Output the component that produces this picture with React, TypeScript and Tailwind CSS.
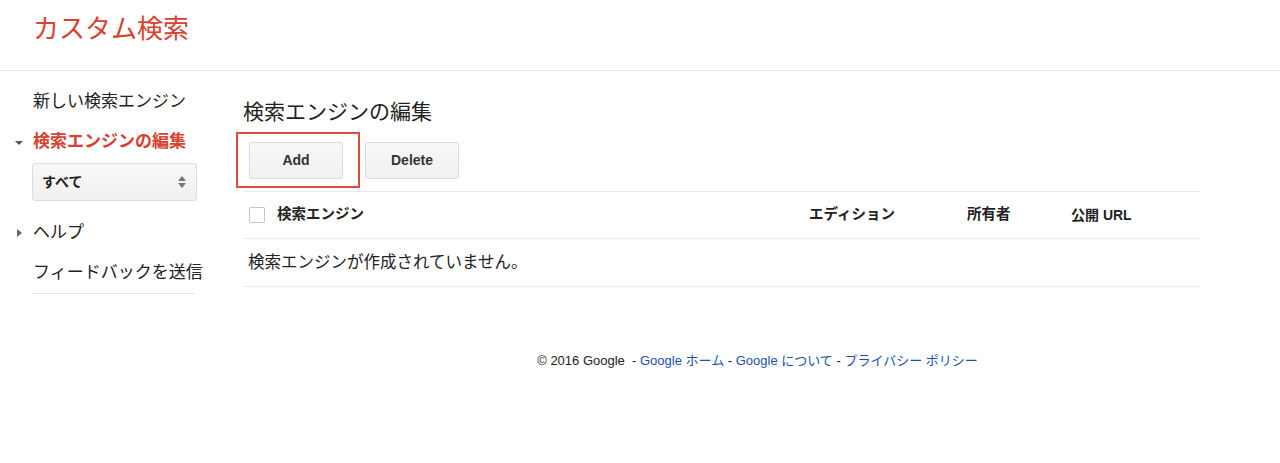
import React from "react";

const font = { fontFamily: '"Liberation Sans", "Noto Sans CJK JP", sans-serif' };

export default function App() {
  return (
    <div className="w-[1280px] h-[463px] bg-white text-[#222] overflow-hidden" style={font}>
      {/* Header */}
      <div className="h-[71px] border-b border-[#e5e5e5] pl-[33px] pt-[13px]">
        <div className="text-[26px] leading-[32px] text-[#d8412f]">カスタム検索</div>
      </div>

      <div className="flex">
        {/* Sidebar */}
        <div className="w-[243px] shrink-0 pt-[11px]">
          <div className="h-[40px] flex items-center pl-[33px] text-[17px]">新しい検索エンジン</div>
          <div className="h-[40px] flex items-center relative pl-[33px] text-[17px] font-bold text-[#d8412f]">
            <span className="absolute left-[15px] top-[19px] w-0 h-0 border-l-[4px] border-r-[4px] border-t-[4px] border-l-transparent border-r-transparent border-t-[#555]"></span>
            検索エンジンの編集
          </div>
          <div className="pl-[32px] mt-[1px]">
            <div className="w-[165px] h-[38px] rounded-[3px] border border-[#dcdcdc] bg-gradient-to-b from-[#f8f8f8] to-[#f0f0f0] flex items-center justify-between pl-[9px] pr-[10px]">
              <span className="text-[14px] font-bold text-[#222]">すべて</span>
              <span className="flex flex-col gap-[2px]">
                <span className="w-0 h-0 border-l-[4px] border-r-[4px] border-b-[5px] border-l-transparent border-r-transparent border-b-[#777]"></span>
                <span className="w-0 h-0 border-l-[4px] border-r-[4px] border-t-[5px] border-l-transparent border-r-transparent border-t-[#777]"></span>
              </span>
            </div>
          </div>
          <div className="h-[40px] mt-[12px] flex items-center relative pl-[33px] text-[17px]">
            <span className="absolute left-[17px] top-[16px] w-0 h-0 border-t-[4px] border-b-[4px] border-l-[5px] border-t-transparent border-b-transparent border-l-[#666]"></span>
            ヘルプ
          </div>
          <div className="h-[40px] flex items-center pl-[33px] text-[17px]">フィードバックを送信</div>
          <div className="ml-[32px] w-[163px] border-t border-[#e5e5e5]"></div>
        </div>

        {/* Main */}
        <div className="flex-1 pr-[80px] pt-[27px]">
          <div className="text-[21px] leading-[28px] text-[#222]">検索エンジンの編集</div>
          <div className="flex gap-[22px] pl-[6px] mt-[16px]">
            <div className="relative">
              <span className="absolute -left-[13px] -top-[10px] -right-[17px] -bottom-[9px] border-2 border-[#dd4b39] pointer-events-none"></span>
              <button className="w-[94px] h-[37px] rounded-[2px] border border-[#dcdcdc] bg-gradient-to-b from-[#f8f8f8] to-[#f1f1f1] text-[14px] font-bold text-[#333]">Add</button>
            </div>
            <button className="w-[94px] h-[37px] rounded-[2px] border border-[#dcdcdc] bg-gradient-to-b from-[#f8f8f8] to-[#f1f1f1] text-[14px] font-bold text-[#333]">Delete</button>
          </div>

          <div className="mt-[12px] border-t border-[#ebebeb]">
            <div className="h-[47px] flex items-center border-b border-[#ebebeb] text-[14px] font-bold text-[#222]">
              <span className="ml-[6px] w-[16px] h-[16px] border border-[#c6c6c6] rounded-[1px] bg-white"></span>
              <span className="ml-[12px] w-[532px] text-[14.5px]">検索エンジン</span>
              <span className="w-[158px] text-[14.5px]">エディション</span>
              <span className="w-[104px] text-[14.5px]">所有者</span>
              <span>公開 URL</span>
            </div>
            <div className="h-[48px] flex items-center border-b border-[#ebebeb] pl-[5px] text-[16.5px] text-[#222]">
              検索エンジンが作成されていません。
            </div>
          </div>

          <div className="mt-[66px] pl-[72px] text-center text-[13px] leading-[16px] text-[#222]">
            © 2016 Google&nbsp; - <a className="text-[#1a4fb0]">Google ホーム</a> - <a className="text-[#1a4fb0]">Google について</a> - <a className="text-[#1a4fb0]">プライバシー ポリシー</a>
          </div>
        </div>
      </div>
    </div>
  );
}
